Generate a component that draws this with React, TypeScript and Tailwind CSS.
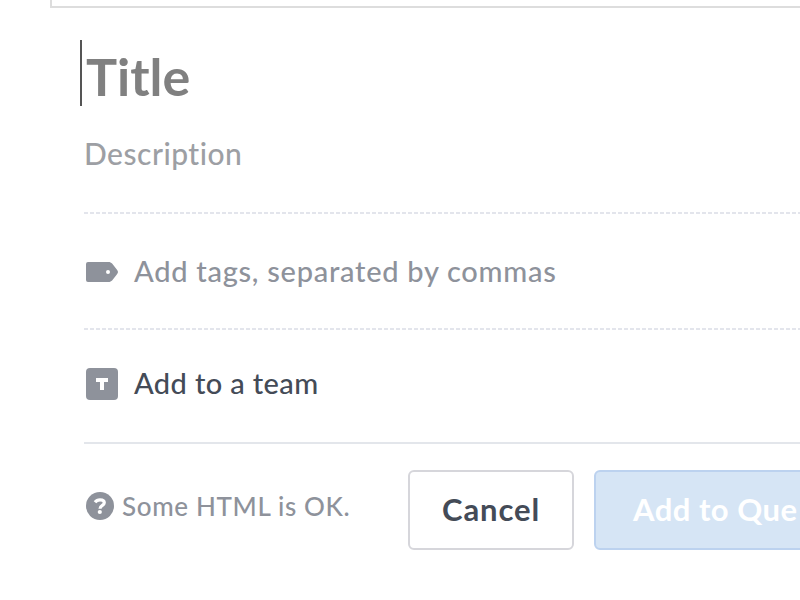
import React from 'react';

// 4px dash, 2px gap
const DashedRule: React.FC = () => (
  <div className="h-[2px] bg-[repeating-linear-gradient(to_right,#e3e5ec_0_4px,transparent_4px_6px)]" />
);

const TagIcon: React.FC = () => (
  <svg className="w-8 h-5" viewBox="0 0 32 20" fill="#8e929b">
    <path
      fillRule="evenodd"
      d="M2 0h20.500c1.500 0 2.700.6 3.600 1.500l4.900 6.300c1.300 1.600 1.300 2.800 0 4.400l-4.900 6.300c-.9.9-2.100 1.500-3.600 1.500H2a2 2 0 0 1-2-2V2a2 2 0 0 1 2-2zm20 8a2 2 0 1 0 0 4 2 2 0 0 0 0-4z"
    />
  </svg>
);

const TeamIcon: React.FC = () => (
  <svg className="w-8 h-8" viewBox="0 0 32 32">
    <rect width="32" height="32" rx="4" fill="#8e929b" />
    <path d="M10 10h12v4h-4v8h-4v-8h-4z" fill="#fff" />
  </svg>
);

const HelpIcon: React.FC = () => (
  <svg className="w-7 h-7" viewBox="0 0 28 28">
    <circle cx="14" cy="14" r="14" fill="#8e929b" />
    <path
      d="M9 10.200C10.200 8.600 11.900 7.900 14 7.900c2.600 0 4.300 1.100 4.300 2.900 0 2.700-4.300 2.500-4.300 6"
      fill="none"
      stroke="#fff"
      strokeWidth="3.200"
    />
    <circle cx="13.800" cy="20" r="2.100" fill="#fff" />
  </svg>
);

export default function App() {
  return (
    <div className="w-[800px] h-[600px] overflow-hidden bg-white font-['Lato',sans-serif] whitespace-nowrap [font-variant-ligatures:none]">
      {/* Bottom edge of the preview box */}
      <div className="ml-[50px] h-2 border-l-2 border-b-2 border-[#dddddd]" />

      <div className="pl-[84px]">
        <div className="-ml-1 mt-8 h-[66px] flex items-center border-l-2 border-[#555555] pl-[4px]">
          <span className="pt-[5px] text-[52px] leading-[66px] font-bold text-[#808080]">Title</span>
        </div>
        <div className="h-[106px] pt-[27px]">
          <span className="block text-[30px] leading-[40px] tracking-[0.5px] font-medium text-[#9d9fa4]">Description</span>
        </div>

        <DashedRule />
        <div className="h-[114px] flex items-center pl-0.5 gap-4 pt-px">
          <TagIcon />
          <span className="pb-0.5 text-[29px] leading-[36px] tracking-[0.72px] font-medium text-[#8e929b]">
            Add tags, separated by commas
          </span>
        </div>

        <DashedRule />
        <div className="h-[112px] flex items-center pl-0.5 gap-4 pb-[4px]">
          <TeamIcon />
          <span className="pb-0.5 text-[29px] leading-[36px] tracking-[0.38px] font-medium text-[#444b57]">Add to a team</span>
        </div>

        <div className="h-[2px] bg-[#e3e6eb]" />
        <div className="mt-[26px] flex h-20">
          <div className="w-[324px] shrink-0 flex items-center pl-0.5 gap-2 pb-[8px]">
            <HelpIcon />
            <span className="text-[26px] tracking-[0.65px] font-medium text-[#8e929b]">Some HTML is OK.</span>
          </div>
          <button className="w-[166px] shrink-0 rounded-md border-2 border-[#d6d6db] pb-0.5 text-[31px] tracking-[0.9px] font-bold text-[#444b57]">
            Cancel
          </button>
          <button className="ml-5 w-[300px] shrink-0 rounded-md border-2 border-[#bcd2ef] bg-[#d6e5f5] pb-0.5 pl-[37px] text-left text-[31px] tracking-[0.5px] font-bold text-white">
            Add to Que
          </button>
        </div>
      </div>
    </div>
  );
}
